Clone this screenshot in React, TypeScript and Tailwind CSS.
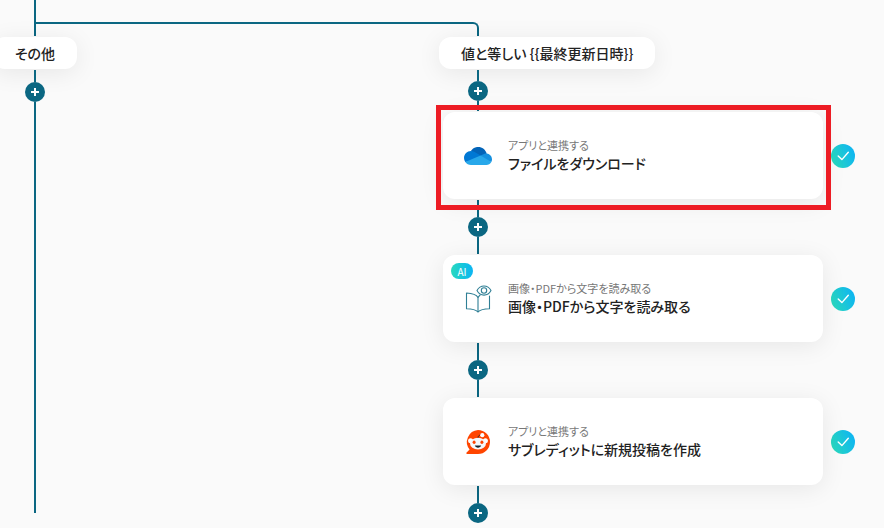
import type { ReactNode } from "react";
import clsx from "clsx";

interface FlowStep {
  id: string;
  category: string;
  title: string;
  icon: ReactNode;
  ai?: boolean;
  highlighted?: boolean;
}

function OneDriveIcon() {
  return (
    <svg viewBox="0 0 1030 660" className="h-[18px] w-7" aria-hidden="true">
      <path
        d="M622.3 445.300 834.900 242C790.700 69.800 615.300-34 443.100 10.200 365.600 30.100 298.200 78.100 254.200 145c3.300-.1 368.100 300.300 368.100 300.300Z"
        fill="#0364b8"
      />
      <path
        d="M392.800 183.300C352.200 158.100 305.300 144.900 257.500 144.900c-1.100 0-2.200.1-3.300.1C112.100 146.800-1.700 263.400 0 405.600c.6 51.500 16.700 101.700 46.200 144l318.600-39.900L609 312.800 392.800 183.300Z"
        fill="#0078d4"
      />
      <path
        d="M834.900 242c-4.700-.3-9.400-.5-14.100-.5-28.500 0-56.800 5.800-82.900 17.100L609 312.800l142 175.500L1005 550c54.800-101.700 16.700-228.600-85-283.400-26.300-14.200-55.300-22.600-85.100-24.600Z"
        fill="#1490df"
      />
      <path
        d="M46.300 549.600C94.400 618.800 173.300 660 257.500 659.900h563.300c76.900 0 147.700-42.200 184.200-109.900L609 312.800 46.300 549.600Z"
        fill="#28a8ea"
      />
    </svg>
  );
}

function ReaderIcon() {
  return (
    <svg
      viewBox="0 0 28 28"
      className="size-7"
      fill="none"
      stroke="#2f7f95"
      strokeWidth="1.1"
      strokeLinecap="round"
      strokeLinejoin="round"
      aria-hidden="true"
    >
      <path d="M14 12.500C12.500 9.800 9 8.300 2.500 8v15.700c5 .1 9.300.9 11.500 3.100 2.200-2.200 6.500-3 11.500-3.100V11" />
      <path d="M14 12.500v14.300M14 12.500c.5-.9 1.200-1.600 2-2.200" />
      <path d="M13 5.500c1.600-2.900 4.100-4.500 7-4.500s5.400 1.600 7 4.500c-1.600 3-4.100 4.600-7 4.600s-5.400-1.600-7-4.600Z" />
      <circle cx="20" cy="5.500" r="2.700" />
    </svg>
  );
}

function RedditIcon() {
  return (
    <svg viewBox="0 0 26 26" className="size-[26px]" aria-hidden="true">
      <path d="M13 1a12 12 0 1 1 0 24H2.200c-.9 0-1.200-.9-.6-1.500l3-3A12 12 0 0 1 13 1Z" fill="#ff4500" />
      <circle cx="5.600" cy="11.700" r="2.500" fill="#fff" />
      <circle cx="20.400" cy="11.700" r="2.500" fill="#fff" />
      <ellipse cx="13" cy="14.600" rx="8" ry="5.900" fill="#f4f8fa" />
      <path d="M13 8.700c.1-1.600 1-2.500 2.600-2.700" fill="none" stroke="#2b2b2b" strokeWidth="1" />
      <circle cx="17.300" cy="6.200" r="2.100" fill="#fff" />
      <ellipse cx="9.100" cy="13.300" rx="1.500" ry="1.700" fill="#ff4500" />
      <ellipse cx="16.900" cy="13.300" rx="1.500" ry="1.700" fill="#ff4500" />
      <path d="M9.800 16.600c2.100-.3 4.300-.3 6.400 0-.5 1.300-1.700 2.100-3.200 2.100s-2.700-.8-3.200-2.100Z" fill="#16252d" />
    </svg>
  );
}

const steps: FlowStep[] = [
  {
    id: "download",
    category: "アプリと連携する",
    title: "ファイルをダウンロード",
    icon: <OneDriveIcon />,
    highlighted: true,
  },
  {
    id: "ocr",
    category: "画像・PDFから文字を読み取る",
    title: "画像・PDFから文字を読み取る",
    icon: <ReaderIcon />,
    ai: true,
  },
  {
    id: "reddit",
    category: "アプリと連携する",
    title: "サブレディットに新規投稿を作成",
    icon: <RedditIcon />,
  },
];

function AddButton() {
  return (
    <button
      type="button"
      aria-label="ステップを追加"
      className="flex size-5 shrink-0 items-center justify-center rounded-full bg-[#0b6782] text-white"
    >
      <svg viewBox="0 0 8 8" className="size-2" stroke="currentColor" strokeWidth="2" aria-hidden="true">
        <path d="M4 0v8M0 4h8" />
      </svg>
    </button>
  );
}

function Line({ className }: { className: string }) {
  return <div className={clsx("w-0.5 bg-[#0b6782]", className)} />;
}

function BranchLabel({ children }: { children: ReactNode }) {
  return (
    <div className="flex h-8 items-center rounded-xl bg-white px-[22px] text-sm font-medium whitespace-nowrap shadow-[0_4px_24px_rgba(0,0,0,0.08)]">
      {children}
    </div>
  );
}

function StatusCheck() {
  return (
    <svg viewBox="0 0 24 24" className="size-6 shrink-0" role="img" aria-label="完了">
      <defs>
        <linearGradient id="status-fill" x1="0" y1="0.7" x2="1" y2="0.3">
          <stop offset="0" stopColor="#2ad9bd" />
          <stop offset="1" stopColor="#0db4f3" />
        </linearGradient>
      </defs>
      <circle cx="12" cy="12" r="12" fill="url(#status-fill)" />
      <path
        d="m7.200 12 3.700 3.600 6.400-7.300"
        fill="none"
        stroke="#fff"
        strokeWidth="1.4"
        strokeLinecap="round"
        strokeLinejoin="round"
      />
    </svg>
  );
}

function StepCard({ step }: { step: FlowStep }) {
  return (
    <div className="my-px flex items-center gap-2">
      <article className="relative flex h-[87px] flex-1 items-center gap-4 rounded-xl bg-white pl-[21px] shadow-[0_4px_24px_rgba(0,0,0,0.08)]">
        {step.ai && (
          <span className="absolute top-2 left-2 flex h-4 w-[22px] items-center justify-center rounded-full bg-linear-to-r from-[#2ad9bd] to-[#0db4f3] text-[10px] text-white">
            AI
          </span>
        )}
        <div className="flex w-7 justify-center">{step.icon}</div>
        <div className="pb-0.5">
          <p className="text-[11px] leading-4 text-[#777]">{step.category}</p>
          <h3 className="text-sm leading-5 font-medium">{step.title}</h3>
        </div>
        {step.highlighted && (
          <div className="pointer-events-none absolute -top-[7px] -right-2 -bottom-[11px] -left-[7px] border-5 border-[#ed1c24]" />
        )}
      </article>
      <StatusCheck />
    </div>
  );
}

export default function App() {
  return (
    <main className="min-h-screen overflow-hidden bg-[#fafafa] font-['Noto_Sans_CJK_JP',sans-serif] text-[#222] [font-feature-settings:'palt']">
      <div className="ml-[34px] w-[445px]">
        <Line className="h-[22px]" />
        <div className="h-3.5 rounded-tr-md border-t-2 border-r-2 border-l-2 border-[#0b6782]" />
      </div>

      <div className="flex">
        <section className="flex w-[443px] shrink-0">
          <div className="flex w-[70px] flex-col items-center pt-px">
            <BranchLabel>その他</BranchLabel>
            <Line className="mt-px h-3" />
            <AddButton />
            <Line className="h-[411px]" />
          </div>
        </section>

        <section className="flex-1 pt-px pr-[29px]">
          <div className="-ml-1 flex">
            <BranchLabel>値と等しい {"{{最終更新日時}}"}</BranchLabel>
          </div>
          <div className="mt-px flex w-[70px] flex-col items-center">
            <Line className="h-[11px]" />
            <AddButton />
            <Line className="h-2.5" />
          </div>

          {steps.map((step, i) => (
            <div key={step.id}>
              <StepCard step={step} />
              <div className="flex w-[70px] flex-col items-center">
                <Line className="h-[17px]" />
                <AddButton />
                {i < steps.length - 1 && <Line className="h-[17px]" />}
              </div>
            </div>
          ))}
        </section>
      </div>
    </main>
  );
}
